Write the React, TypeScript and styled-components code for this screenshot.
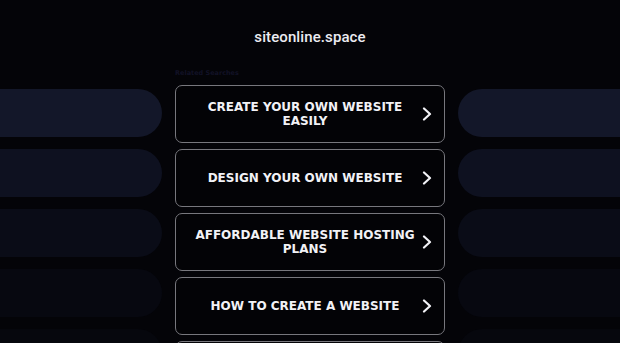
import React from "react";
import styled, { createGlobalStyle } from "styled-components";

const Global = createGlobalStyle`
  html, body { margin: 0; padding: 0; background: #040408; }
  body { width: 620px; height: 343px; overflow: hidden; }
`;

const Page = styled.div`
  width: 620px;
  height: 343px;
  overflow: hidden;
  background: #040408;
  display: flex;
  flex-direction: column;
`;

const Header = styled.header`
  flex: none;
  height: 62px;
  display: flex;
  align-items: flex-start;
  justify-content: center;
  padding-top: 28px;
  box-sizing: border-box;
`;

const Title = styled.h1`
  margin: 0;
  font-family: Roboto, "Liberation Sans", sans-serif;
  font-weight: 500;
  font-size: 15px;
  line-height: 18px;
  color: #ececf2;
  letter-spacing: 0.1px;
`;

const Body = styled.div`
  flex: none;
  display: grid;
  grid-template-columns: 1fr 270px 1fr;
  column-gap: 13px;
`;

const SideColumn = styled.div<{ $side: "left" | "right" }>`
  display: flex;
  flex-direction: column;
  gap: 12px;
  padding-top: 27px;
  overflow: hidden;
  align-items: ${(p) => (p.$side === "left" ? "flex-end" : "flex-start")};
`;

const Pill = styled.div<{ $shade: string }>`
  width: 240px;
  height: 48px;
  flex: none;
  border-radius: 24px;
  background: ${(p) => p.$shade};
`;

const Center = styled.div`
  display: flex;
  flex-direction: column;
`;

const Related = styled.div`
  font-family: "DejaVu Sans", sans-serif;
  font-size: 6.5px;
  font-weight: bold;
  color: #121226;
  height: 23px;
  line-height: 22px;
`;

const List = styled.div`
  display: flex;
  flex-direction: column;
  gap: 6px;
`;

const LinkButton = styled.a`
  box-sizing: border-box;
  height: 58px;
  border: 1.6px solid #77777d;
  border-radius: 7px;
  background: #030306;
  display: flex;
  align-items: center;
  padding: 0 12px 0 12px;
  text-decoration: none;
  cursor: pointer;
`;

const Label = styled.span`
  flex: 1;
  text-align: center;
  font-family: "DejaVu Sans", Verdana, sans-serif;
  font-weight: bold;
  font-size: 12px;
  line-height: 14px;
  letter-spacing: 0;
  color: #f2f2f6;
`;

const Chevron = styled.svg`
  flex: none;
  width: 10px;
  height: 14px;
`;

const items = [
  "CREATE YOUR OWN WEBSITE EASILY",
  "DESIGN YOUR OWN WEBSITE",
  "AFFORDABLE WEBSITE HOSTING PLANS",
  "HOW TO CREATE A WEBSITE",
  "CHEAP WEBSITE BUILDER",
];

const shades = ["#131729", "#0e1120", "#0a0c17", "#070810", "#06070d"];

export default function App() {
  return (
    <Page>
      <Global />
      <Header>
        <Title>siteonline.space</Title>
      </Header>
      <Body>
        <SideColumn $side="left">
          {shades.map((s, i) => (
            <Pill key={i} $shade={s} />
          ))}
        </SideColumn>
        <Center>
          <Related>Related Searches</Related>
          <List>
            {items.map((t) => (
              <LinkButton key={t}>
                <Label>{t}</Label>
                <Chevron viewBox="0 0 10 14">
                  <path
                    d="M2 1.5 L8 7 L2 12.5"
                    fill="none"
                    stroke="#f2f2f6"
                    strokeWidth="2.2"
                    strokeLinecap="round"
                    strokeLinejoin="round"
                  />
                </Chevron>
              </LinkButton>
            ))}
          </List>
        </Center>
        <SideColumn $side="right">
          {shades.map((s, i) => (
            <Pill key={i} $shade={s} />
          ))}
        </SideColumn>
      </Body>
    </Page>
  );
}
